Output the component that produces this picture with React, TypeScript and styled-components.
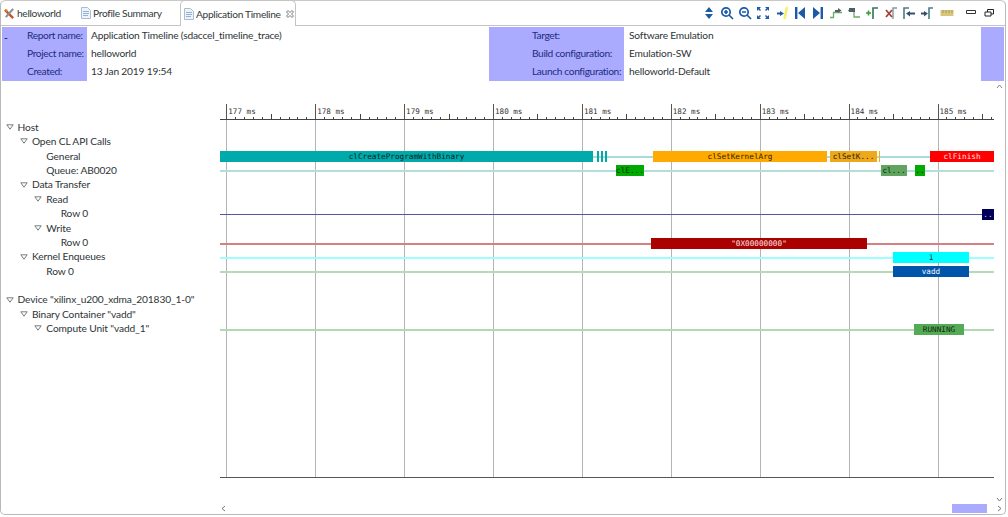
import React from 'react';
import styled, { createGlobalStyle } from 'styled-components';

const GlobalStyle = createGlobalStyle`
  html, body {
    margin: 0;
    padding: 0;
    background: #fff;
    overflow: hidden;
  }
  body {
    font-family: Lato, "Liberation Sans", sans-serif;
    font-size: 10.2px;
    letter-spacing: -0.18px;
    color: #2e3436;
  }
`;

// page coordinates of the timeline canvas corner, bars below are in page px
const ORIGIN_X = 220;
const ORIGIN_Y = 80;

const Frame = styled.div`
  position: relative;
  box-sizing: border-box;
  width: 1006px;
  height: 515px;
  border: 1px solid #b9b9b9;
  border-top: none;
  border-radius: 5px;
  display: flex;
  flex-direction: column;
`;

const TabBar = styled.div`
  display: flex;
  align-items: stretch;
  height: 26px;
  box-sizing: border-box;
  border-bottom: 1px solid #c4c4c4;
  border-top: 1px solid #c9c9c9;
  border-radius: 5px 5px 0 0;
`;

const Tab = styled.div<{ $active?: boolean; $width: number; $pad: number }>`
  display: flex;
  align-items: center;
  gap: 2px;
  box-sizing: border-box;
  width: ${p => p.$width}px;
  padding-left: ${p => p.$pad}px;
  height: ${p => (p.$active ? 26 : 24)}px;
  white-space: nowrap;
  letter-spacing: -0.32px;
  color: #33393b;
  ${p =>
    p.$active &&
    `
    margin-top: -1px;
    background: #fff;
    border: 1px solid #c4c4c4;
    border-bottom: none;
    border-radius: 5px 5px 0 0;
  `}
`;

const Toolbar = styled.div`
  margin-left: auto;
  display: flex;
  align-items: center;
  padding-right: 9px;
`;

const ToolIcon = styled.svg<{ $gap?: number }>`
  width: 14px;
  height: 14px;
  margin-left: ${p => p.$gap ?? 4.2}px;
  flex: none;
`;

const Header = styled.div`
  display: grid;
  grid-template-columns: 85px 402px 135px 357px 23px;
  grid-auto-rows: 18px;
  margin: 1px 0 0 1px;
  height: 53px;
`;

const HeaderLabel = styled.div<{ $pad: number }>`
  background: #aaaaff;
  color: #1f2c7c;
  padding-left: ${p => p.$pad}px;
  line-height: 17px;
  position: relative;
  white-space: nowrap;
  letter-spacing: -0.36px;
`;

const HeaderValue = styled.div<{ $pad: number }>`
  padding-left: ${p => p.$pad}px;
  line-height: 17px;
  color: #2e3436;
`;

const HeaderFiller = styled.div`
  background: #aaaaff;
`;

const Collapse = styled.span`
  position: absolute;
  left: 2px;
  top: 2px;
  font-weight: 700;
  color: #1f2c7c;
`;

const Body = styled.div`
  display: flex;
  flex: 1;
  min-height: 0;
`;

const Tree = styled.div`
  width: 219px;
  flex: none;
  padding-top: 39.8px;
`;

const TreeRow = styled.div<{ $level: number }>`
  height: 14.4px;
  line-height: 14.4px;
  display: flex;
  align-items: center;
  padding-left: ${p => 4.5 + p.$level * 14.4}px;
  white-space: nowrap;
  letter-spacing: -0.12px;
`;

const Caret = styled.svg`
  width: 8px;
  height: 6px;
  margin-right: 4px;
  flex: none;
`;

const CaretSpace = styled.span`
  width: 12px;
  flex: none;
`;

const Timeline = styled.div`
  position: relative;
  flex: 1;
`;

const Chart = styled.svg`
  position: absolute;
  left: 0;
  top: 0;
  width: 786px;
  height: 410px;
  font-family: "DejaVu Sans Mono", "Liberation Mono", monospace;
  letter-spacing: 0;
`;

const Rail = styled.div<{ $color: string; $thick?: boolean }>`
  position: absolute;
  height: ${p => (p.$thick ? 2 : 1)}px;
  background: ${p => p.$color};
`;

const Bar = styled.div<{ $bg: string; $fg: string }>`
  position: absolute;
  box-sizing: border-box;
  background: ${p => p.$bg};
  color: ${p => p.$fg};
  font-family: "DejaVu Sans Mono", "Liberation Mono", monospace;
  font-size: 7.7px;
  letter-spacing: 0;
  text-align: center;
  overflow: hidden;
  white-space: nowrap;
`;

const ScrollRow = styled.div`
  display: flex;
  align-items: center;
  height: 10px;
  margin-bottom: 1px;
  padding-left: 219px;
  padding-right: 2px;
`;

const Thumb = styled.div`
  width: 35px;
  height: 9px;
  background: #aaaaff;
  margin-left: auto;
  margin-right: 9px;
`;

const Chevron = styled.svg`
  width: 7px;
  height: 7px;
  flex: none;
`;

const SideChevron = styled(Chevron)<{ $top: number }>`
  position: absolute;
  right: 2px;
  top: ${p => p.$top}px;
`;

const CloseMark = styled.svg`
  width: 8px;
  height: 8px;
  margin-left: 3px;
  flex: none;
`;

const DocIcon = () => (
  <svg width="10" height="12" viewBox="0 0 10 12">
    <path d="M.5.5h6l3 3v8h-9z" fill="#eef3fa" stroke="#a9bdd3" />
    <path d="M2 4.5h6M2 6.5h6M2 8.5h5" stroke="#8fb2d6" />
  </svg>
);

const ProjectIcon = () => (
  <svg width="11" height="12" viewBox="0 0 12 13">
    <path d="M1 3l9 9" stroke="#c8502a" strokeWidth="2.6" />
    <path d="M10 2L2 11" stroke="#8d8f92" strokeWidth="2.4" />
    <path d="M1 2l3 1-1 3z" fill="#e08a30" />
  </svg>
);

const BLUE = '#1c5aa6';
const GREEN = '#6fa867';

// toolbar glyphs on a 14 box, left to right as in the picture
const toolIcons: { gap?: number; draw: React.ReactNode }[] = [
  { draw: <path d="M7 1l4 5H3zM7 13l4-5H3z" fill={BLUE} /> },
  {
    draw: (
      <g fill="none" stroke={BLUE} strokeWidth="1.7">
        <circle cx="6" cy="6" r="4.2" />
        <path d="M9 9l4 4M4 6h4M6 4v4" />
      </g>
    ),
  },
  {
    draw: (
      <g fill="none" stroke={BLUE} strokeWidth="1.7">
        <circle cx="6" cy="6" r="4.2" />
        <path d="M9 9l4 4M4 6h4" />
      </g>
    ),
  },
  {
    draw: (
      <path
        d="M1 1h4L3.6 2.4 5 4 4 5 2.4 3.6 1 5zM13 1v4l-1.4-1.4L10 5 9 4l1.6-1.6L9 1zM1 13V9l1.4 1.4L4 9l1 1-1.6 1.6L5 13zM13 13H9l1.4-1.4L9 10l1-1 1.6 1.6L13 9z"
        fill={BLUE}
      />
    ),
  },
  {
    draw: (
      <g>
        <path d="M12 1L9.5 13" stroke="#f9ef6a" strokeWidth="2.6" />
        <path d="M2 6.5h3V5l4 2.5L5 10V8.5H2z" fill={BLUE} />
      </g>
    ),
  },
  { draw: <path d="M2 1h2.4v12H2zM12 1v12L5 7z" fill={BLUE} /> },
  { draw: <path d="M9.6 1H12v12H9.6zM2 1v12l7-6z" fill={BLUE} /> },
  {
    draw: (
      <g>
        <path d="M1 11.5h3.5V6.5H13" fill="none" stroke={GREEN} strokeWidth="1.3" />
        <path d="M6 4h3V2l3.5 2.5L9 7V6H6z" fill="#4f5f68" />
      </g>
    ),
  },
  {
    draw: (
      <g>
        <path d="M1 4.5h6v6.5h6" fill="none" stroke={GREEN} strokeWidth="1.3" />
        <path d="M2 2h6v4H2z" fill="#4f5f68" />
      </g>
    ),
  },
  {
    draw: (
      <g>
        <path d="M8 13V2h5" fill="none" stroke="#35705a" strokeWidth="1.6" />
        <path d="M1 7h5M3.5 4.5v5" stroke="#3d9a3d" strokeWidth="1.6" />
      </g>
    ),
  },
  {
    draw: (
      <g>
        <path d="M9 13V2h4" fill="none" stroke="#7f9a96" strokeWidth="1.4" />
        <path d="M2 4l6 7M8 4l-6 7" stroke="#a2443a" strokeWidth="1.8" />
      </g>
    ),
  },
  {
    draw: (
      <g>
        <path d="M2 13V2h5" fill="none" stroke="#4f7d80" strokeWidth="1.6" />
        <path d="M13 6.5v2H8v2L4 7.5 8 5v1.5z" fill="#35506e" />
      </g>
    ),
  },
  {
    draw: (
      <g>
        <path d="M9 13V2h4" fill="none" stroke="#4f7d80" strokeWidth="1.6" />
        <path d="M1 6.5v2h3v2l4-3L4 5v1.5z" fill="#35506e" />
      </g>
    ),
  },
  {
    gap: 6,
    draw: (
      <g>
        <path d="M.5 4h13v6H.5z" fill="#d8c67c" />
        <path d="M3 4v3M6 4v3M9 4v3M12 4v3" stroke="#a8975a" />
      </g>
    ),
  },
  {
    gap: 10,
    draw: <path d="M2.5 4.5h9v3h-9z" fill="#fff" stroke="#333" />,
  },
  {
    gap: 4,
    draw: (
      <g fill="#fff" stroke="#222">
        <path d="M5.5 3.5h6v4.5h-6z" />
        <path d="M3 6h6v4H3z" />
      </g>
    ),
  },
];

const tree: { level: number; label: string; caret?: boolean }[] = [
  { level: 0, label: 'Host', caret: true },
  { level: 1, label: 'Open CL API Calls', caret: true },
  { level: 2, label: 'General' },
  { level: 2, label: 'Queue: AB0020' },
  { level: 1, label: 'Data Transfer', caret: true },
  { level: 2, label: 'Read', caret: true },
  { level: 3, label: 'Row 0' },
  { level: 2, label: 'Write', caret: true },
  { level: 3, label: 'Row 0' },
  { level: 1, label: 'Kernel Enqueues', caret: true },
  { level: 2, label: 'Row 0' },
  { level: 0, label: '' },
  { level: 0, label: 'Device "xilinx_u200_xdma_201830_1-0"', caret: true },
  { level: 1, label: 'Binary Container "vadd"', caret: true },
  { level: 2, label: 'Compute Unit "vadd_1"', caret: true },
];

const rails = [
  { y: 155.5, x1: 220, x2: 930, color: '#a6dcdc', thick: true },
  { y: 170, x1: 220, x2: 994, color: '#b4ded8', thick: true },
  { y: 214, x1: 220, x2: 984, color: '#55559a', thick: false },
  { y: 243, x1: 220, x2: 994, color: '#d88080', thick: true },
  { y: 257, x1: 220, x2: 994, color: '#9dffff', thick: true },
  { y: 271, x1: 220, x2: 994, color: '#b8d8b8', thick: true },
  { y: 329, x1: 220, x2: 994, color: '#b0dab0', thick: true },
];

const bars = [
  { x1: 220, x2: 593, y: 151, h: 11, bg: '#00aaaa', fg: '#062224', text: 'clCreateProgramWithBinary' },
  { x1: 597, x2: 599, y: 151, h: 11, bg: '#00aaaa', fg: '#000', text: '' },
  { x1: 601, x2: 603, y: 151, h: 11, bg: '#00aaaa', fg: '#000', text: '' },
  { x1: 605, x2: 607, y: 151, h: 11, bg: '#00aaaa', fg: '#000', text: '' },
  { x1: 653, x2: 827, y: 151, h: 11, bg: '#ffaa00', fg: '#2a2000', text: 'clSetKernelArg' },
  { x1: 830, x2: 877, y: 151, h: 11, bg: '#eda81c', fg: '#2a2000', text: 'clSetK...' },
  { x1: 879, x2: 880, y: 151, h: 11, bg: '#ffaa00', fg: '#000', text: '' },
  { x1: 930, x2: 994, y: 151, h: 11, bg: '#ff0000', fg: '#ffe4e4', text: 'clFinish' },
  { x1: 616, x2: 644, y: 165, h: 11, bg: '#00aa00', fg: '#022a02', text: 'clE...' },
  { x1: 881, x2: 907, y: 165, h: 11, bg: '#5fa55f', fg: '#0a1f0a', text: 'cl...' },
  { x1: 915, x2: 925, y: 165, h: 11, bg: '#00aa00', fg: '#022a02', text: '..' },
  { x1: 982, x2: 994, y: 209, h: 11, bg: '#000055', fg: '#d8d8f0', text: '..' },
  { x1: 651, x2: 867, y: 238, h: 11, bg: '#aa0000', fg: '#fae2e2', text: '"0X00000000"' },
  { x1: 893, x2: 969, y: 252, h: 11, bg: '#00ffff', fg: '#083c3c', text: '1' },
  { x1: 893, x2: 969, y: 266, h: 11, bg: '#0055aa', fg: '#eef4fa', text: 'vadd' },
  { x1: 914, x2: 964, y: 324, h: 11, bg: '#55aa55', fg: '#0e2a0e', text: 'RUNNING' },
];

const MS_WIDTH = 88.9;
const FIRST_MS_X = 6.3;
const milliseconds = [177, 178, 179, 180, 181, 182, 183, 184, 185];

const ticks: { x: number; len: number }[] = [];
for (let i = 0; i < 88; i++) {
  const x = FIRST_MS_X + (i * MS_WIDTH) / 10;
  if (x > 774) break;
  if (i % 10 === 0) continue;
  ticks.push({ x, len: i % 5 === 0 ? 5 : 2 });
}

const App = () => {
  return (
    <>
      <GlobalStyle />
      <Frame>
        <TabBar>
          <Tab $width={78} $pad={3}>
            <ProjectIcon />
            helloworld
          </Tab>
          <Tab $width={101} $pad={2}>
            <DocIcon />
            Profile Summary
          </Tab>
          <Tab $active $width={116} $pad={3}>
            <DocIcon />
            Application Timeline
            <CloseMark viewBox="0 0 8 8">
              <path d="M.5 2L2 .5 4 2.5 6 .5 7.5 2 5.5 4l2 2L6 7.5l-2-2-2 2L.5 6l2-2z" fill="none" stroke="#555" strokeWidth=".8" />
            </CloseMark>
          </Tab>
          <Toolbar>
            {toolIcons.map((icon, i) => (
              <ToolIcon key={i} viewBox="0 0 14 14" $gap={icon.gap}>
                {icon.draw}
              </ToolIcon>
            ))}
          </Toolbar>
        </TabBar>

        <Header>
          <HeaderLabel $pad={25}>
            <Collapse>-</Collapse>
            Report name:
          </HeaderLabel>
          <HeaderValue $pad={4}>Application Timeline (sdaccel_timeline_trace)</HeaderValue>
          <HeaderLabel $pad={43}>Target:</HeaderLabel>
          <HeaderValue $pad={5}>Software Emulation</HeaderValue>
          <HeaderFiller />
          <HeaderLabel $pad={25}>Project name:</HeaderLabel>
          <HeaderValue $pad={4}>helloworld</HeaderValue>
          <HeaderLabel $pad={43}>Build configuration:</HeaderLabel>
          <HeaderValue $pad={5}>Emulation-SW</HeaderValue>
          <HeaderFiller />
          <HeaderLabel $pad={25}>Created:</HeaderLabel>
          <HeaderValue $pad={4}>13 Jan 2019 19:54</HeaderValue>
          <HeaderLabel $pad={43}>Launch configuration:</HeaderLabel>
          <HeaderValue $pad={5}>helloworld-Default</HeaderValue>
          <HeaderFiller />
        </Header>

        <Body>
          <Tree>
            {tree.map((row, i) => (
              <TreeRow key={i} $level={row.level}>
                {row.caret ? (
                  <Caret viewBox="0 0 8 6">
                    <path d="M.8.8h6.4L4 5.2z" fill="#fff" stroke="#6b6f70" strokeWidth=".9" />
                  </Caret>
                ) : (
                  <CaretSpace />
                )}
                {row.label}
              </TreeRow>
            ))}
          </Tree>

          <Timeline>
            <Chart viewBox="0 0 786 410">
              {milliseconds.map((ms, i) => {
                const x = FIRST_MS_X + i * MS_WIDTH;
                return (
                  <g key={ms}>
                    <path d={`M${Math.round(x) + 0.5} 24V397`} stroke="#b4b4b4" />
                    <path d={`M${Math.round(x) + 0.5} 24V40`} stroke="#555" />
                    <text x={x + 2} y={34} fontSize="7.6" fill="#333">
                      {ms} ms
                    </text>
                  </g>
                );
              })}
              <path d="M0 39.5H774" stroke="#444" />
              {ticks.map(t => (
                <path key={t.x} d={`M${Math.round(t.x) + 0.5} ${39 - t.len}V39`} stroke="#444" />
              ))}
              <path d="M0 397.5H774" stroke="#555" />
            </Chart>
            {rails.map(r => (
              <Rail
                key={r.y}
                $color={r.color}
                $thick={r.thick}
                style={{ left: r.x1 - ORIGIN_X, width: r.x2 - r.x1, top: r.y - ORIGIN_Y }}
              />
            ))}
            {bars.map(b => (
              <Bar
                key={`${b.x1}-${b.y}`}
                $bg={b.bg}
                $fg={b.fg}
                style={{
                  left: b.x1 - ORIGIN_X,
                  width: b.x2 - b.x1,
                  top: b.y - ORIGIN_Y,
                  height: b.h,
                  lineHeight: `${b.h}px`,
                }}
              >
                {b.text}
              </Bar>
            ))}
          </Timeline>
        </Body>

        <SideChevron viewBox="0 0 7 7" $top={83}>
          <path d="M1 5l2.5-3L6 5" fill="none" stroke="#888" />
        </SideChevron>
        <SideChevron viewBox="0 0 7 7" $top={496}>
          <path d="M1 2l2.5 3L6 2" fill="none" stroke="#777" />
        </SideChevron>

        <ScrollRow>
          <Chevron viewBox="0 0 7 7">
            <path d="M5 1L2 3.5 5 6" fill="none" stroke="#777" />
          </Chevron>
          <Thumb />
          <Chevron viewBox="0 0 7 7">
            <path d="M2 1l3 2.5L2 6" fill="none" stroke="#777" />
          </Chevron>
        </ScrollRow>
      </Frame>
    </>
  );
};

export default App;
